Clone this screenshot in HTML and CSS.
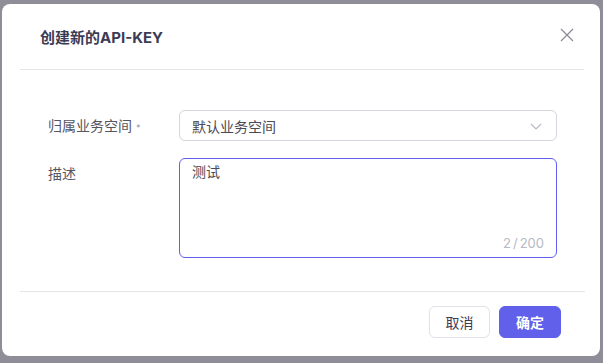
FILE: index.html
```html
<!DOCTYPE html>
<html lang="zh-CN">
<head>
  <meta charset="UTF-8">
  <title>创建新的API-KEY</title>
  <link rel="stylesheet" href="styles.css">
</head>
<body>
  <div class="modal">
    <div class="modal-header">
      <h2 class="modal-title">创建新的API-KEY</h2>
      <span class="close">
        <svg width="14" height="14" viewBox="0 0 14 14"><path d="M1 1L13 13M13 1L1 13" stroke="#8a8a96" stroke-width="1.2" fill="none"/></svg>
      </span>
    </div>

    <div class="modal-body">
      <div class="form-row">
        <label class="form-label">归属业务空间<span class="req">*</span></label>
        <div class="select">
          <span>默认业务空间</span>
          <svg width="14" height="14" viewBox="0 0 14 14"><path d="M2 5L7 10L12 5" stroke="#b8b8c4" stroke-width="1.1" fill="none"/></svg>
        </div>
      </div>
      <div class="form-row">
        <label class="form-label">描述</label>
        <div class="textarea">
          <div class="textarea-text">测试</div>
          <div class="count">2<span class="slash">/</span>200</div>
        </div>
      </div>
    </div>

    <div class="modal-footer">
      <button class="btn">取消</button>
      <button class="btn btn-primary">确定</button>
    </div>
  </div>
</body>
</html>
```

FILE: styles.css
```css
* {
  box-sizing: border-box;
  margin: 0;
  padding: 0;
  font-family: 'Inter', 'Noto Sans CJK SC', sans-serif;
}
html, body {
  height: 100%;
}
body {
  background: #8f8d97;
  padding: 4px 3px 7px 2px;
}
.modal {
  background: #fff;
  border-radius: 8px;
  height: 100%;
  display: flex;
  flex-direction: column;
}
.modal-header {
  display: flex;
  justify-content: space-between;
  align-items: center;
  margin: 0 16px 0 18px;
  height: 66px;
  padding: 0 10px 0 20px;
  border-bottom: 1px solid #e6e6ea;
}
.modal-title {
  font-size: 15px;
  font-weight: 700;
  color: #3b3b54;
}
.close {
  display: flex;
  margin-top: -4px;
}
.modal-body {
  flex: 1;
  padding: 40px 43px 0 46px;
  display: flex;
  flex-direction: column;
  gap: 17px;
}
.form-row {
  display: flex;
  align-items: flex-start;
}
.form-label {
  width: 131px;
  font-size: 14px;
  color: #55555f;
  line-height: 31px;
  height: 31px;
}
.req {
  font-size: 9px;
  color: #9a9aa4;
  margin-left: 4px;
}
.select {
  flex: 1;
  height: 31px;
  border: 1px solid #d6d4dc;
  border-radius: 6px;
  display: flex;
  justify-content: space-between;
  align-items: center;
  padding: 0 13px 0 12px;
  font-size: 14px;
  color: #4a4a55;
}
.textarea {
  flex: 1;
  height: 100px;
  border: 1px solid #5f5ff0;
  border-radius: 6px;
  padding: 3px 12px 6px 12px;
  display: flex;
  flex-direction: column;
  justify-content: space-between;
}
.textarea-text {
  font-size: 14px;
  color: #4a4a55;
  line-height: 20px;
}
.count {
  align-self: flex-end;
  font-size: 13px;
  color: #b8b8c4;
}
.slash {
  margin: 0 2px;
}
.modal-footer {
  margin: 0 15px 0 18px;
  border-top: 1px solid #e6e6ea;
  height: 65px;
  display: flex;
  justify-content: flex-end;
  align-items: center;
  gap: 9px;
  padding: 0 24px 4px 0;
}
.btn {
  height: 32px;
  width: 61px;
  border: 1px solid #e2e1e8;
  border-radius: 6px;
  background: #fff;
  font-size: 14px;
  color: #3b3b54;
  cursor: pointer;
}
.btn-primary {
  width: 62px;
  background: #6060ea;
  border-color: #6060ea;
  color: #fff;
  font-weight: 700;
}
```
